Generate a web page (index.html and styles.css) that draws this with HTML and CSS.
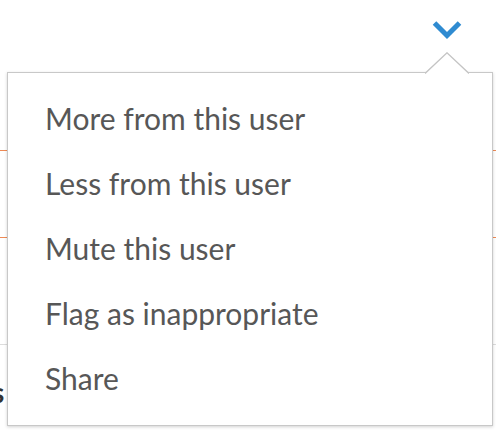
FILE: index.html
```html
<!DOCTYPE html>
<html>
<head>
<meta charset="utf-8">
<link rel="stylesheet" href="styles.css">
</head>
<body>
<div class="page">
  <div class="feed">
    <div class="row r1"></div>
    <div class="row r2"></div>
    <div class="row r3"></div>
    <div class="row r4"><span class="frag">s</span></div>
  </div>
  <button class="toggle" aria-label="Options">
    <svg width="30" height="26" viewBox="0 0 30 26"><path d="M2.5 5 L15 17.5 L27.5 5" fill="none" stroke="#2f8bd1" stroke-width="5"/></svg>
  </button>
  <div class="menu">
    <svg class="caret" width="44" height="22" viewBox="0 0 44 22"><path d="M0 21.5 L22 0.8 L44 21.5" fill="#fff" stroke="#c4c4c4" stroke-width="1.3"/></svg>
    <ul class="items">
      <li>More from this user</li>
      <li>Less from this user</li>
      <li>Mute this user</li>
      <li>Flag as inappropriate</li>
      <li>Share</li>
    </ul>
  </div>
</div>
</body>
</html>
```
FILE: styles.css
```css
* { box-sizing: border-box; }
html, body { margin: 0; padding: 0; background: #fff; }
.page {
  position: relative;
  width: 496px;
  height: 430px;
  overflow: hidden;
  font-family: "Source Sans Pro", Lato, "Open Sans", sans-serif;
}
.feed { display: flex; flex-direction: column; }
.row { width: 100%; }
.r1 { height: 151px; border-bottom: 1px solid #ee8a55; }
.r2 { height: 87px; border-bottom: 1px solid #ee8a55; }
.r3 { height: 107px; border-bottom: 1px solid #dcdcdc; }
.r4 { height: 84px; position: relative; }
.frag {
  display: block;
  margin-left: -8px;
  margin-top: 32px;
  font-size: 28px;
  font-weight: 700;
  color: #333;
  line-height: 30px;
}
.toggle {
  position: absolute;
  left: 432px;
  top: 18px;
  width: 30px;
  height: 26px;
  padding: 0;
  border: 0;
  background: none;
}
.toggle svg { display: block; }
.menu {
  position: absolute;
  left: 7px;
  top: 72px;
  width: 486px;
  height: 354px;
  background: #fff;
  border: 1px solid #c8c8c8;
  box-shadow: 0 1px 3px rgba(0,0,0,0.18);
}
.caret {
  position: absolute;
  top: -21px;
  left: 417px;
  display: block;
}
.items {
  list-style: none;
  margin: 0;
  padding: 13px 0 0 37px;
}
.items li {
  font-size: 30px;
  line-height: 65px;
  height: 65px;
  color: #575757;
  white-space: nowrap;
}
```
